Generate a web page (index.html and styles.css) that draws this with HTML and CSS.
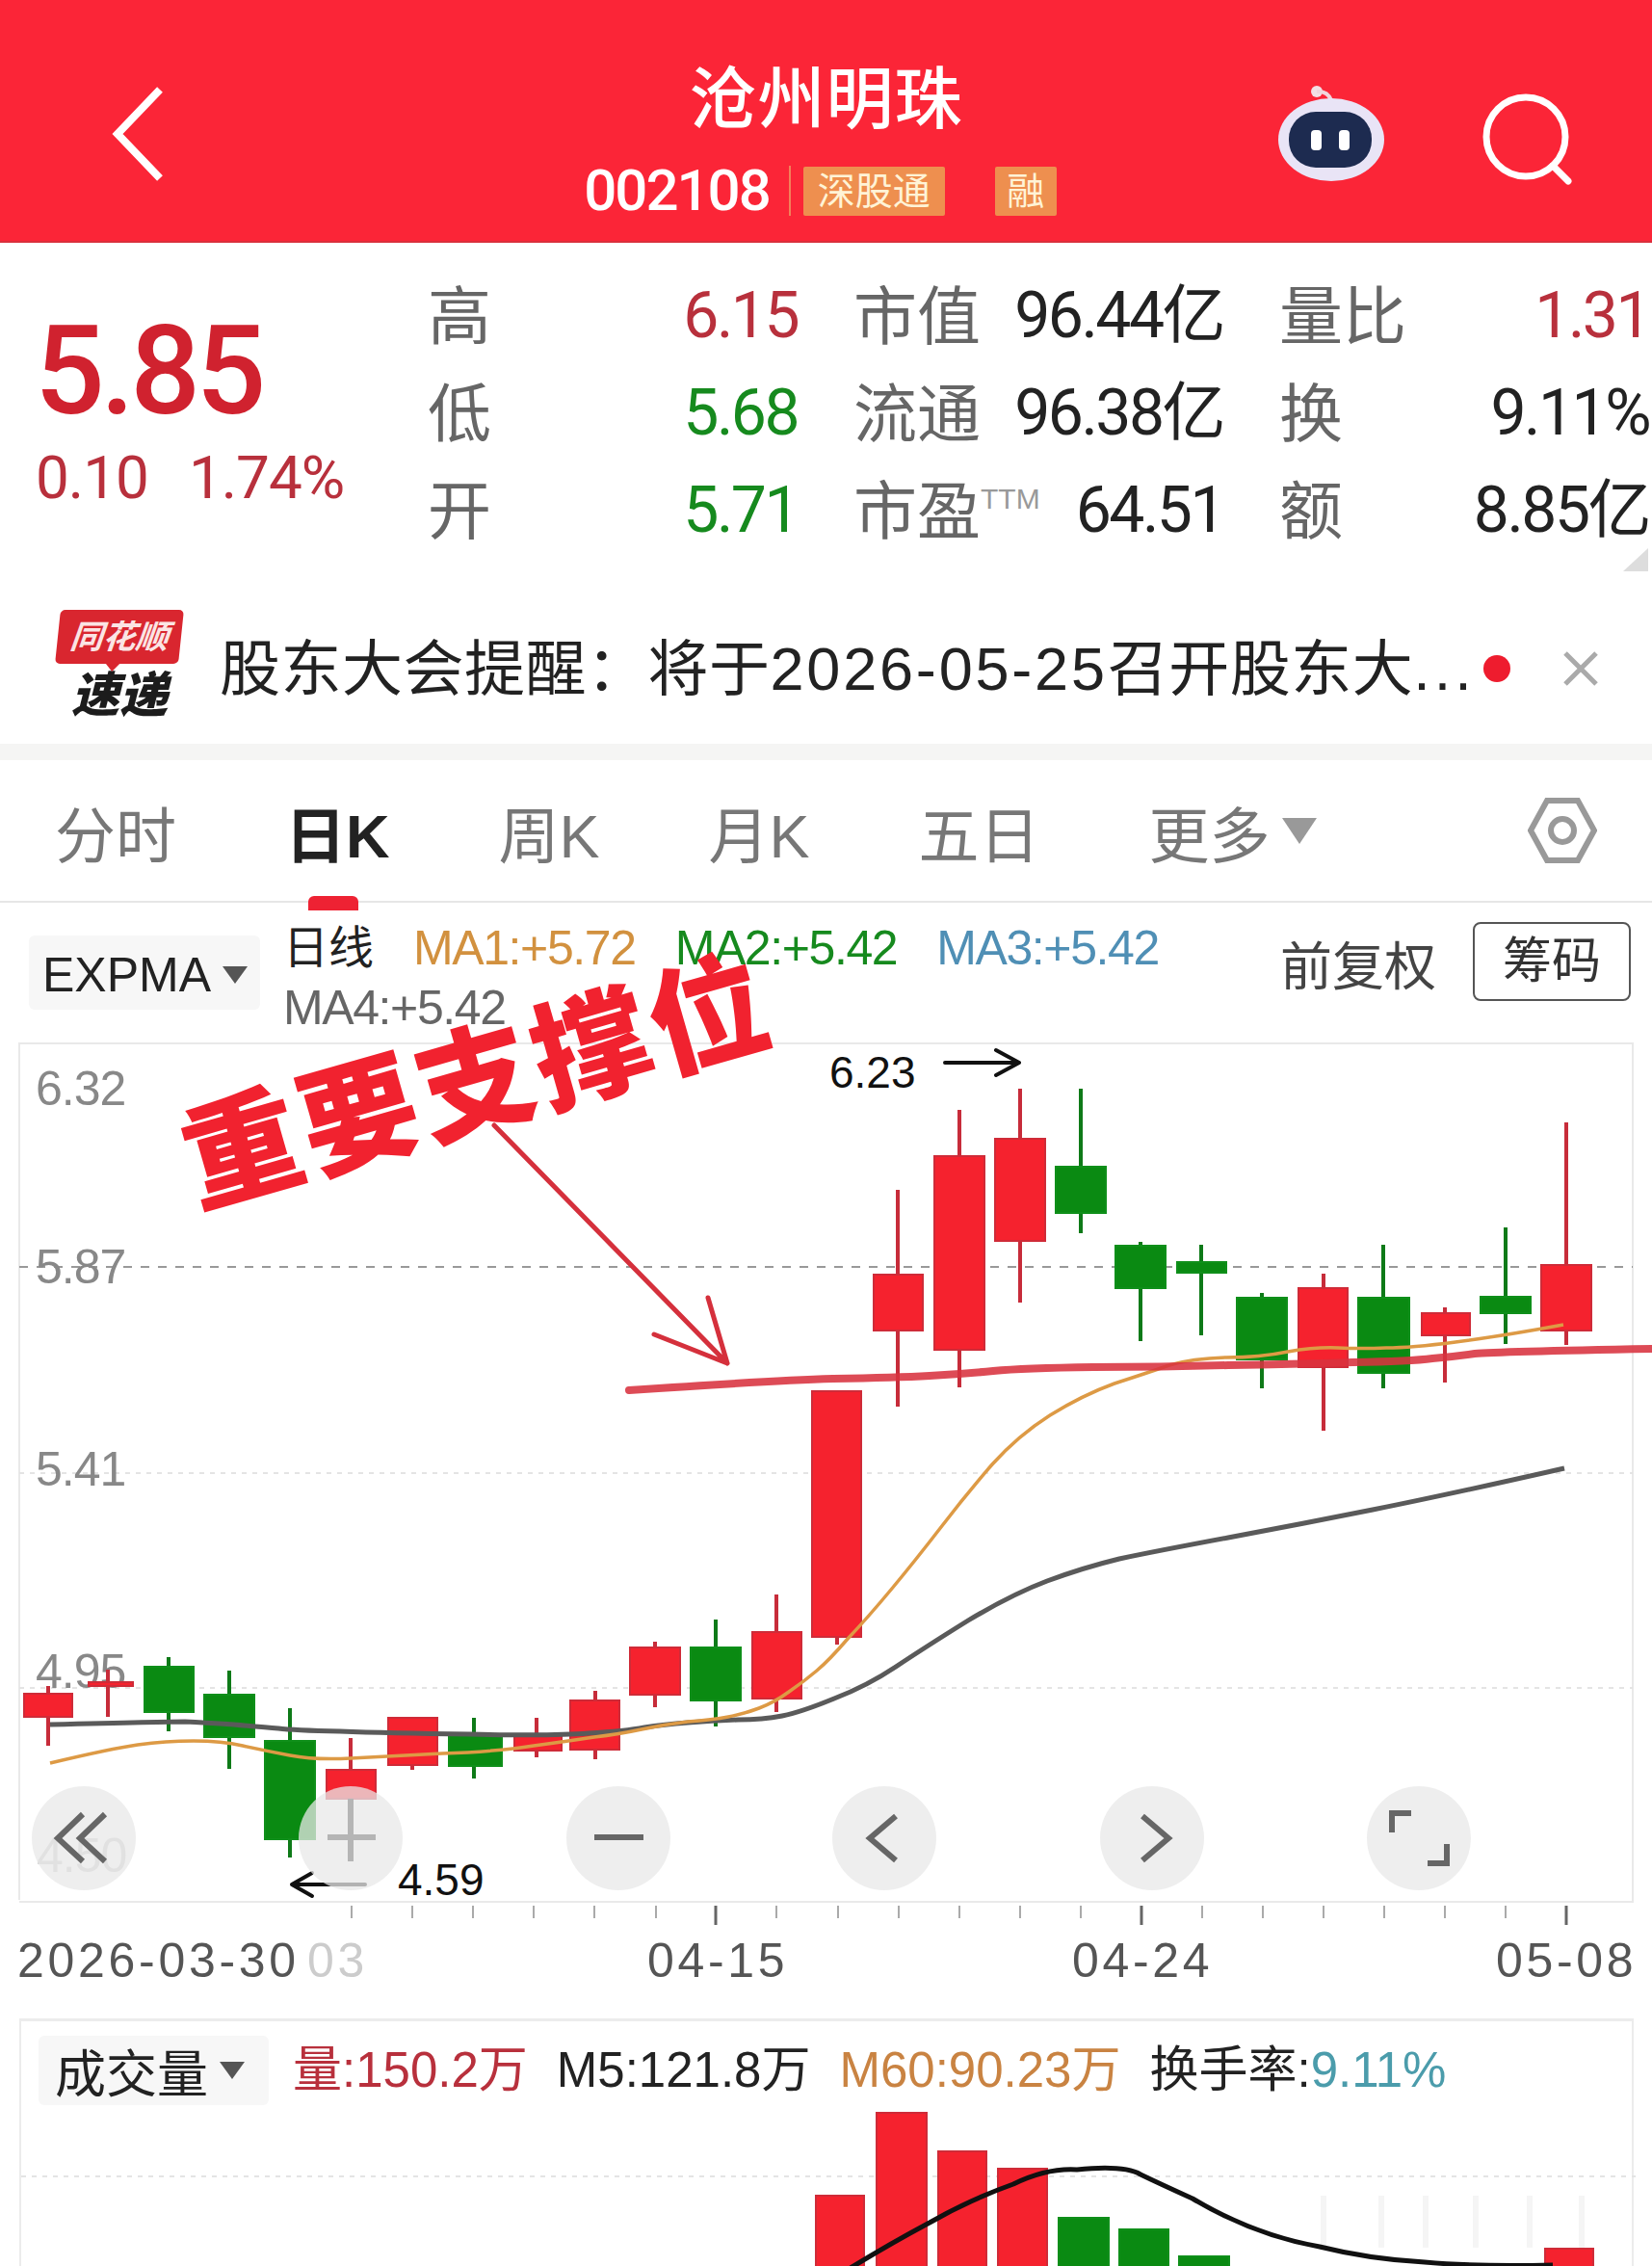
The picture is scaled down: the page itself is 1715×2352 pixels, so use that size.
FILE: index.html
```html
<!DOCTYPE html>
<html lang="zh-CN">
<head>
    <meta charset="UTF-8">
    <meta name="viewport" content="width=device-width, initial-scale=1.0">
    <title>沧州明珠</title>
    <link rel="stylesheet" href="styles.css">
</head>
<body>
    <header class="topbar">
        <svg class="back-icon" viewBox="0 0 60 100"><path d="M52 4 L8 50 L52 96"/></svg>
        <div class="stock-title">
            <h1>沧州明珠</h1>
            <div class="stock-code">
                <span class="code">002108</span>
                <span class="badge badge-wide">深股通</span>
                <span class="badge">融</span>
            </div>
        </div>
        <svg class="robot-icon" viewBox="0 0 112 100">
            <circle cx="41" cy="7" r="6" fill="#f3dfe4"/>
            <path d="M41 7 Q52 6 56 16" fill="none" stroke="#f0d5dc" stroke-width="4"/>
            <ellipse cx="56" cy="57" rx="55" ry="43" fill="#e9e4f6"/>
            <rect x="12" y="28" width="86" height="58" rx="28" fill="#1d2b50"/>
            <rect x="35" y="47" width="11" height="21" rx="4" fill="#fff"/>
            <rect x="64" y="47" width="11" height="21" rx="4" fill="#fff"/>
        </svg>
        <svg class="search-icon" viewBox="0 0 96 100">
            <circle cx="46" cy="46" r="41"/>
            <path d="M74 76 L90 92"/>
        </svg>
    </header>

    <section class="quote">
        <div class="price-box">
            <div class="price">5.85</div>
            <div class="change"><span>0.10</span><span>1.74%</span></div>
        </div>
        <div class="stats">
            <div class="stat"><span class="name">高</span><span class="rise">6.15</span></div>
            <div class="stat"><span class="name">市值</span><span class="val">96.44亿</span></div>
            <div class="stat"><span class="name">量比</span><span class="rise">1.31</span></div>
            <div class="stat"><span class="name">低</span><span class="fall">5.68</span></div>
            <div class="stat"><span class="name">流通</span><span class="val">96.38亿</span></div>
            <div class="stat"><span class="name">换</span><span class="val">9.11%</span></div>
            <div class="stat"><span class="name">开</span><span class="fall">5.71</span></div>
            <div class="stat"><span class="name">市盈<sup>TTM</sup></span><span class="val">64.51</span></div>
            <div class="stat"><span class="name">额</span><span class="val">8.85亿</span></div>
        </div>
        <div class="corner"></div>
    </section>

    <section class="notice">
        <div class="logo">
            <div class="logo-top"><span>同花顺</span></div>
            <div class="logo-bottom">速递</div>
        </div>
        <p class="notice-text">股东大会提醒：将于<span class="date">2026-05-25</span>召开股东大<span class="more">...</span></p>
        <span class="dot"></span>
        <svg class="close-icon" viewBox="0 0 36 36"><path d="M2 2 L34 34 M34 2 L2 34"/></svg>
    </section>

    <nav class="tabs">
        <span class="tab">分时</span>
        <span class="tab active">日K</span>
        <span class="tab">周K</span>
        <span class="tab">月K</span>
        <span class="tab">五日</span>
        <span class="tab">更多<i class="caret caret-big"></i></span>
        <svg class="gear-icon" viewBox="0 0 72 68">
            <path d="M20 3 H52 L69 34 L52 65 H20 L3 34 Z"/>
            <circle cx="36" cy="34" r="12"/>
        </svg>
    </nav>

    <section class="indicator">
        <div class="select select-expma">EXPMA<i class="caret"></i></div>
        <div class="legend">
            <span class="ma-day">日线</span>
            <span class="ma1">MA1:+5.72</span>
            <span class="ma2">MA2:+5.42</span>
            <span class="ma3">MA3:+5.42</span>
            <span class="ma4">MA4:+5.42</span>
        </div>
        <span class="fq">前复权</span>
        <span class="chip">筹码</span>
    </section>

    <svg class="kline" viewBox="0 1082 1715 978">
        <!-- frame and grid -->
        <path class="frame" d="M20 1972 V1083 H1695 V1974 H20"/>
        <path class="grid-dash" d="M20 1315 H1695"/>
        <path class="grid-dot" d="M20 1529 H1695 M20 1752 H1695"/>

        <text class="y-label" x="37" y="1147">6.32</text>
        <text class="y-label" x="37" y="1332">5.87</text>
        <text class="y-label" x="37" y="1542">5.41</text>
        <text class="y-label" x="37" y="1752">4.95</text>
        <text class="y-label faded" x="38" y="1943">4.50</text>

        <!-- candles: wick then body -->
        <g class="up">
            <path d="M50 1750 V1812 M112 1733 V1782 M364 1804 V1867 M428 1783 V1837 M557 1783 V1824 M618 1755 V1826 M680 1704 V1772 M806 1655 V1777 M869 1699 V1707 M932 1235 V1460 M996 1152 V1440 M1059 1130 V1352 M1374 1322 V1485 M1500 1357 V1435 M1626 1165 V1396"/>
            <rect x="25" y="1758" width="50" height="24"/>
            <rect x="92" y="1746" width="46" height="4"/>
            <rect x="339" y="1837" width="51" height="30"/>
            <rect x="403" y="1783" width="51" height="49"/>
            <rect x="534" y="1800" width="49" height="17"/>
            <rect x="592" y="1765" width="51" height="51"/>
            <rect x="654" y="1710" width="52" height="49"/>
            <rect x="781" y="1694" width="51" height="69"/>
            <rect x="843" y="1444" width="51" height="255"/>
            <rect x="907" y="1323" width="51" height="58"/>
            <rect x="970" y="1200" width="52" height="201"/>
            <rect x="1033" y="1182" width="52" height="106"/>
            <rect x="1348" y="1337" width="51" height="82"/>
            <rect x="1476" y="1363" width="50" height="23"/>
            <rect x="1600" y="1313" width="52" height="68"/>
        </g>
        <g class="down">
            <path d="M175 1720 V1797 M238 1734 V1836 M301 1773 V1928 M492 1783 V1846 M743 1681 V1792 M1122 1130 V1280 M1184 1289 V1392 M1247 1292 V1386 M1310 1342 V1441 M1436 1292 V1441 M1563 1274 V1395"/>
            <rect x="150" y="1730" width="51" height="47"/>
            <rect x="212" y="1759" width="52" height="44"/>
            <rect x="275" y="1807" width="52" height="102"/>
            <rect x="466" y="1801" width="55" height="32"/>
            <rect x="717" y="1710" width="52" height="55"/>
            <rect x="1096" y="1211" width="52" height="48"/>
            <rect x="1158" y="1293" width="52" height="44"/>
            <rect x="1222" y="1310" width="51" height="11"/>
            <rect x="1284" y="1347" width="52" height="64"/>
            <rect x="1410" y="1347" width="53" height="78"/>
            <rect x="1537" y="1346" width="52" height="17"/>
        </g>

        <!-- moving averages -->
        <path class="line-ma2" d="M52,1790 Q172,1787 192,1787 Q212,1788 243,1790 Q275,1793 289,1794 Q304,1796 353,1797 Q402,1799 488,1800 Q574,1802 611,1799 Q649,1797 669,1793 Q689,1790 714,1788 Q740,1786 766,1785 Q792,1785 812,1781 Q832,1777 866,1763 Q900,1750 930,1730 Q960,1710 1005,1682 Q1050,1655 1087,1641 Q1125,1627 1162,1618 Q1200,1610 1275,1596 Q1350,1582 1425,1567 Q1500,1552 1624,1524"/>
        <path class="line-ma1" d="M52,1830 Q115,1815 143,1811 Q172,1807 201,1807 Q230,1807 252,1812 Q275,1817 301,1822 Q327,1827 364,1825 Q402,1823 459,1820 Q517,1818 554,1812 Q591,1807 617,1803 Q643,1800 666,1795 Q689,1790 714,1787 Q740,1785 756,1782 Q772,1779 788,1773 Q804,1767 819,1756 Q835,1745 848,1734 Q861,1723 880,1701 Q900,1680 925,1650 Q950,1620 977,1585 Q1004,1550 1030,1520 Q1057,1490 1090,1469 Q1124,1448 1157,1436 Q1191,1425 1214,1417 Q1238,1410 1273,1409 Q1308,1409 1337,1403 Q1366,1398 1389,1399 Q1413,1400 1439,1399 Q1465,1399 1511,1393 Q1558,1387 1623,1375"/>

        <text class="mark" x="861" y="1129">6.23</text>
        <path class="mark-arrow" d="M981 1103 H1058 M1034 1090 L1058 1103 L1034 1116"/>
        <path class="mark-arrow" d="M379 1956 H303 M324 1944 L303 1956 L324 1968"/>

        <!-- hand drawn annotation -->
        <path class="support" d="M653,1443 Q800,1433 865,1431 Q931,1430 965,1428 Q1000,1426 1031,1423 Q1062,1420 1135,1419 Q1208,1419 1275,1417 Q1343,1416 1404,1414 Q1465,1413 1487,1410 Q1510,1408 1531,1405 Q1553,1403 1715,1400"/>
        <path class="note-arrow" d="M513 1168 L755 1415 M735 1347 L755 1415 L679 1385"/>

        <!-- chart buttons -->
        <g class="zoom-btns">
            <circle cx="87" cy="1908" r="54"/>
            <circle cx="364" cy="1908" r="54"/>
            <circle cx="642" cy="1908" r="54"/>
            <circle cx="918" cy="1908" r="54"/>
            <circle cx="1196" cy="1908" r="54"/>
            <circle cx="1473" cy="1908" r="54"/>
        </g>
        <path class="btn-icon light" d="M340 1907 H390 M364 1867 V1932"/>
        <path class="btn-icon" d="M86 1883 L60 1908 L86 1932 M109 1883 L83 1908 L109 1932 M617 1907 H668 M930 1885 L903 1908 L930 1931 M1186 1885 L1213 1908 L1186 1931 M1445 1902 V1882 H1465 M1502 1914 V1934 H1482"/>
        <text class="mark" x="413" y="1967">4.59</text>

        <!-- x axis -->
        <path class="tick" d="M365 1978 V1991 M428 1978 V1991 M491 1978 V1991 M554 1978 V1991 M617 1978 V1991 M681 1978 V1991 M806 1978 V1991 M870 1978 V1991 M933 1978 V1991 M996 1978 V1991 M1059 1978 V1991 M1122 1978 V1991 M1248 1978 V1991 M1311 1978 V1991 M1374 1978 V1991 M1437 1978 V1991 M1500 1978 V1991 M1563 1978 V1991"/>
        <path class="tick major" d="M743 1978 V1998 M1185 1978 V1998 M1626 1978 V1998"/>
        <text class="x-label" x="18" y="2052">2026-03-30</text>
        <text class="x-label faint" x="319" y="2052">03</text>
        <text class="x-label" x="672" y="2052">04-15</text>
        <text class="x-label" x="1113" y="2052">04-24</text>
        <text class="x-label" x="1553" y="2052">05-08</text>

        <text class="note-text" transform="translate(205 1252) rotate(-16)" textLength="625">重要支撑位</text>
    </svg>

    <section class="volume">
        <div class="volume-head">
            <div class="select select-vol">成交量<i class="caret"></i></div>
            <span class="v-red">量:150.2万</span>
            <span class="v-black">M5:121.8万</span>
            <span class="v-orange">M60:90.23万</span>
            <span class="v-black">换手率:<em>9.11%</em></span>
        </div>
        <svg class="vol-bars" viewBox="20 2190 1676 162">
            <path class="grid-dot" d="M20 2259 H1696"/>
            <path class="wm" d="M1372 2279 V2333 M1432 2279 V2333 M1478 2279 V2333 M1530 2279 V2333 M1586 2279 V2333 M1640 2279 V2333"/>
            <g class="up">
                <rect x="845" y="2279" width="50" height="80"/>
                <rect x="908" y="2193" width="52" height="170"/>
                <rect x="972" y="2233" width="50" height="130"/>
                <rect x="1034" y="2251" width="51" height="110"/>
                <rect x="1602" y="2334" width="50" height="30"/>
            </g>
            <g class="down">
                <rect x="1097" y="2302" width="52" height="60"/>
                <rect x="1160" y="2314" width="51" height="50"/>
                <rect x="1222" y="2342" width="52" height="20"/>
                <rect x="1537" y="2350" width="65" height="10"/>
            </g>
            <path class="line-vol" d="M881,2354 Q920,2330 963,2307 Q1005,2283 1050,2267 Q1085,2250 1116,2252 Q1165,2247 1182,2257 Q1205,2268 1236,2282 Q1300,2320 1368,2332 Q1420,2345 1477,2348 Q1532,2353 1610,2351"/>
        </svg>
    </section>
</body>
</html>
```

FILE: styles.css
```css
* {
    box-sizing: border-box;
}

html, body {
    margin: 0;
    padding: 0;
}

body {
    width: 1715px;
    height: 2352px;
    overflow: hidden;
    background-color: #fff;
    font-family: "Liberation Sans", "Noto Sans CJK SC", sans-serif;
    color: #222;
}

svg {
    display: block;
}

/* top bar */
.topbar {
    height: 252px;
    background-color: #fb2537;
    border-bottom: 2px solid #d9303d;
    position: relative;
    display: flex;
    align-items: flex-start;
    color: #fff;
}

.back-icon {
    width: 60px;
    height: 100px;
    margin: 89px 0 0 114px;
    fill: none;
    stroke: #fff;
    stroke-width: 8;
}

.stock-title {
    position: absolute;
    left: 0;
    right: 0;
    top: 62px;
    display: flex;
    flex-direction: column;
    align-items: center;
}

.stock-title h1 {
    margin: 0;
    font-size: 70px;
    line-height: 84px;
    font-weight: 500;
    letter-spacing: 1px;
}

.stock-code {
    display: flex;
    align-items: center;
    margin-top: 26px;
    height: 52px;
    padding-right: 12px;
}

.code {
    font-family: Roboto, sans-serif;
    font-size: 60px;
    font-weight: 500;
    letter-spacing: -2px;
    padding-right: 20px;
    border-right: 2px solid #f2805a;
    line-height: 52px;
}

.badge {
    width: 64px;
    height: 51px;
    margin-left: 13px;
    background-color: #ee8f4f;
    border-radius: 2px;
    font-size: 39px;
    line-height: 51px;
    text-align: center;
    color: #fff3d6;
}

.badge-wide {
    width: 147px;
    margin-right: 39px;
}

.robot-icon {
    width: 112px;
    height: 100px;
    margin: 88px 0 0 auto;
}

.search-icon {
    width: 96px;
    height: 100px;
    margin: 96px 81px 0 100px;
    fill: none;
    stroke: #fff;
    stroke-width: 7;
    stroke-linecap: round;
}

/* quote block */
.quote {
    height: 363px;
    display: flex;
    position: relative;
    padding-top: 25px;
}

.price-box {
    width: 446px;
    padding-left: 36px;
    color: #d0222f;
    font-family: Roboto, sans-serif;
}

.price {
    font-size: 128px;
    font-weight: 500;
    letter-spacing: -4.5px;
    line-height: 130px;
    margin-top: 43px;
}

.change {
    display: flex;
    gap: 42px;
    font-size: 62px;
    letter-spacing: -1px;
    line-height: 64px;
    margin-top: 14px;
    padding-left: 1px;
    color: #b8303c;
}

.stats {
    display: grid;
    grid-template-columns: repeat(3, 382px);
    grid-auto-rows: 101px;
    column-gap: 60px;
}

.stat {
    display: flex;
    justify-content: space-between;
    align-items: center;
    font-family: Roboto, "Noto Sans CJK SC", sans-serif;
    font-size: 66px;
    line-height: 80px;
    letter-spacing: -2.5px;
}

.name {
    font-family: "Noto Sans CJK SC", sans-serif;
    font-size: 66px;
    letter-spacing: 0;
    color: #666;
    margin-top: -9px;
    margin-left: -2px;
}

.name sup {
    font-family: "Liberation Sans", sans-serif;
    font-size: 30px;
    color: #999;
    vertical-align: 26px;
    line-height: 0;
}

.val {
    color: #222;
}

.rise {
    color: #b8303c;
}

.fall {
    color: #168a1e;
}

.corner {
    position: absolute;
    right: 4px;
    bottom: 22px;
    width: 0;
    height: 0;
    border-left: 26px solid transparent;
    border-bottom: 24px solid #ddd;
}

/* notice */
.notice {
    height: 157px;
    display: flex;
    align-items: center;
    padding-left: 57px;
}

.logo {
    width: 134px;
    display: flex;
    flex-direction: column;
    align-items: center;
    margin-top: -7px;
}

.logo-top {
    width: 128px;
    height: 56px;
    background-color: #d9262f;
    border-radius: 5px;
    transform: skewX(-6deg);
    font-size: 34px;
    line-height: 56px;
    font-weight: 700;
    font-style: italic;
    text-align: center;
    color: #fbe4e4;
    position: relative;
    white-space: nowrap;
}

.logo-top::after {
    content: "";
    position: absolute;
    left: 52px;
    bottom: -8px;
    width: 0;
    height: 0;
    border-left: 8px solid transparent;
    border-right: 8px solid transparent;
    border-top: 9px solid #d9262f;
}

.logo-bottom {
    font-size: 50px;
    line-height: 50px;
    font-weight: 900;
    font-style: italic;
    color: #1c1c1c;
    margin-top: 8px;
}

.notice-text {
    margin: 0 0 0 37px;
    font-size: 63px;
    letter-spacing: 0.5px;
    line-height: 80px;
    color: #222;
    white-space: nowrap;
}

.date {
    letter-spacing: 2.8px;
}

.more {
    letter-spacing: 4px;
}

.dot {
    width: 28px;
    height: 28px;
    border-radius: 50%;
    background-color: #ee1c2e;
    margin-left: 8px;
}

.close-icon {
    width: 36px;
    height: 36px;
    margin-left: 55px;
    fill: none;
    stroke: #aaa;
    stroke-width: 5;
}

/* period tabs */
.tabs {
    height: 165px;
    border-top: 17px solid #f5f5f4;
    border-bottom: 2px solid #e6e6e6;
    display: flex;
    align-items: center;
    gap: 113px;
    padding: 0 57px;
    font-size: 63px;
    color: #777;
}

.tab {
    position: relative;
    white-space: nowrap;
    display: flex;
    align-items: center;
}

.tab.active {
    font-weight: 700;
    color: #222;
}

.tab.active::after {
    content: "";
    position: absolute;
    left: 24px;
    bottom: -37px;
    width: 52px;
    height: 15px;
    border-radius: 6px 6px 0 0;
    background-color: #ee2233;
}

.caret {
    display: inline-block;
    width: 0;
    height: 0;
    border-left: 13px solid transparent;
    border-right: 13px solid transparent;
    border-top: 18px solid #555;
    margin-left: 12px;
}

.caret-big {
    border-left-width: 18px;
    border-right-width: 18px;
    border-top: 27px solid #999;
}

.gear-icon {
    width: 72px;
    height: 68px;
    margin-left: auto;
    fill: none;
    stroke: #999;
    stroke-width: 6;
}

/* indicator row */
.indicator {
    height: 145px;
    display: flex;
    align-items: flex-start;
    padding: 16px 22px 0 30px;
}

.select {
    display: flex;
    align-items: center;
    background-color: #f7f7f7;
    border-radius: 6px;
    white-space: nowrap;
}

.select-expma {
    width: 240px;
    height: 77px;
    margin-top: 18px;
    padding: 4px 0 0 14px;
    font-size: 50px;
    color: #222;
}

.legend {
    width: 960px;
    margin-left: 24px;
    display: flex;
    flex-wrap: wrap;
    column-gap: 41px;
    row-gap: 0;
    font-size: 50px;
    letter-spacing: -1.4px;
    line-height: 62px;
    white-space: nowrap;
}

.ma-day {
    color: #222;
    letter-spacing: 0;
    font-size: 47px;
}

.ma1 {
    color: #d2913f;
}

.ma2 {
    color: #168a1e;
}

.ma3 {
    color: #4f8fb5;
}

.ma4 {
    color: #666;
}

.fq {
    margin: 21px 0 0 auto;
    font-size: 54px;
    line-height: 60px;
    color: #444;
}

.chip {
    width: 164px;
    height: 82px;
    margin: 4px 0 0 38px;
    border: 2px solid #555;
    border-radius: 8px;
    font-size: 51px;
    line-height: 78px;
    text-align: center;
    color: #333;
}

/* k line chart */
.kline {
    width: 1715px;
    height: 978px;
    position: relative;
    overflow: visible;
    font-family: "Liberation Sans", sans-serif;
}

.frame {
    fill: none;
    stroke: #e9e9e9;
    stroke-width: 2;
}

.grid-dash {
    stroke: #999;
    stroke-width: 2;
    stroke-dasharray: 9 9;
}

.grid-dot {
    stroke: #e4e4e4;
    stroke-width: 2;
    stroke-dasharray: 5 6;
}

.y-label {
    font-size: 50px;
    letter-spacing: -1px;
    fill: #888;
}

.y-label.faded {
    fill: #ccc;
}

.up path {
    fill: none;
    stroke: #c72c3a;
    stroke-width: 4;
}

.up rect {
    fill: #f5222e;
    stroke: #cf2b38;
    stroke-width: 2;
}

.down path {
    fill: none;
    stroke: #0e7a18;
    stroke-width: 4;
}

.down rect {
    fill: #0a8a12;
    stroke: #0f8f1a;
    stroke-width: 2;
}

.line-ma2 {
    fill: none;
    stroke: #5a5a5a;
    stroke-width: 5;
}

.line-ma1 {
    fill: none;
    stroke: #dd9a45;
    stroke-width: 3.5;
}

.support {
    fill: none;
    stroke: #d8323f;
    stroke-width: 8;
    stroke-linecap: round;
    opacity: 0.88;
}

.note-arrow {
    fill: none;
    stroke: #d5303c;
    stroke-width: 5;
    stroke-linecap: round;
    stroke-linejoin: round;
}

.note-text {
    font-family: "Noto Sans CJK SC", sans-serif;
    font-size: 122px;
    font-weight: 900;
    fill: #f1222f;
}

.mark {
    font-size: 46px;
    fill: #111;
}

.mark-arrow {
    fill: none;
    stroke: #111;
    stroke-width: 4;
    stroke-linecap: round;
    stroke-linejoin: round;
}

.zoom-btns circle {
    fill: #e8e8e8;
    opacity: 0.75;
}

.btn-icon {
    fill: none;
    stroke: #666;
    stroke-width: 6;
}

.btn-icon.light {
    stroke: #b5b5b5;
}

.tick {
    stroke: #aaa;
    stroke-width: 2;
}

.tick.major {
    stroke: #666;
    stroke-width: 3;
}

.x-label {
    font-size: 50px;
    letter-spacing: 3.7px;
    fill: #555;
}

.x-label.faint {
    fill: #ccc;
}

/* volume panel */
.volume {
    margin: 35px 19px 0 20px;
    border: 2px solid #ececec;
    border-bottom: 0;
    border-top-width: 3px;
}

.volume-head {
    height: 92px;
    display: flex;
    align-items: flex-start;
    padding: 15px 0 0 18px;
    font-size: 51px;
    white-space: nowrap;
}

.select-vol {
    width: 239px;
    height: 72px;
    padding-left: 17px;
    margin-right: 25px;
    font-size: 53px;
    color: #222;
}

.volume-head > span {
    margin-right: 30px;
    line-height: 72px;
}

.v-red {
    color: #b8303c;
}

.v-black {
    color: #222;
}

.v-orange {
    color: #c98342;
}

.volume-head em {
    font-style: normal;
    color: #4b9cab;
}

.vol-bars {
    width: 1676px;
    height: 162px;
}

.line-vol {
    fill: none;
    stroke: #111;
    stroke-width: 5;
}

.wm {
    stroke: #f5f5f5;
    stroke-width: 6;
}
```
